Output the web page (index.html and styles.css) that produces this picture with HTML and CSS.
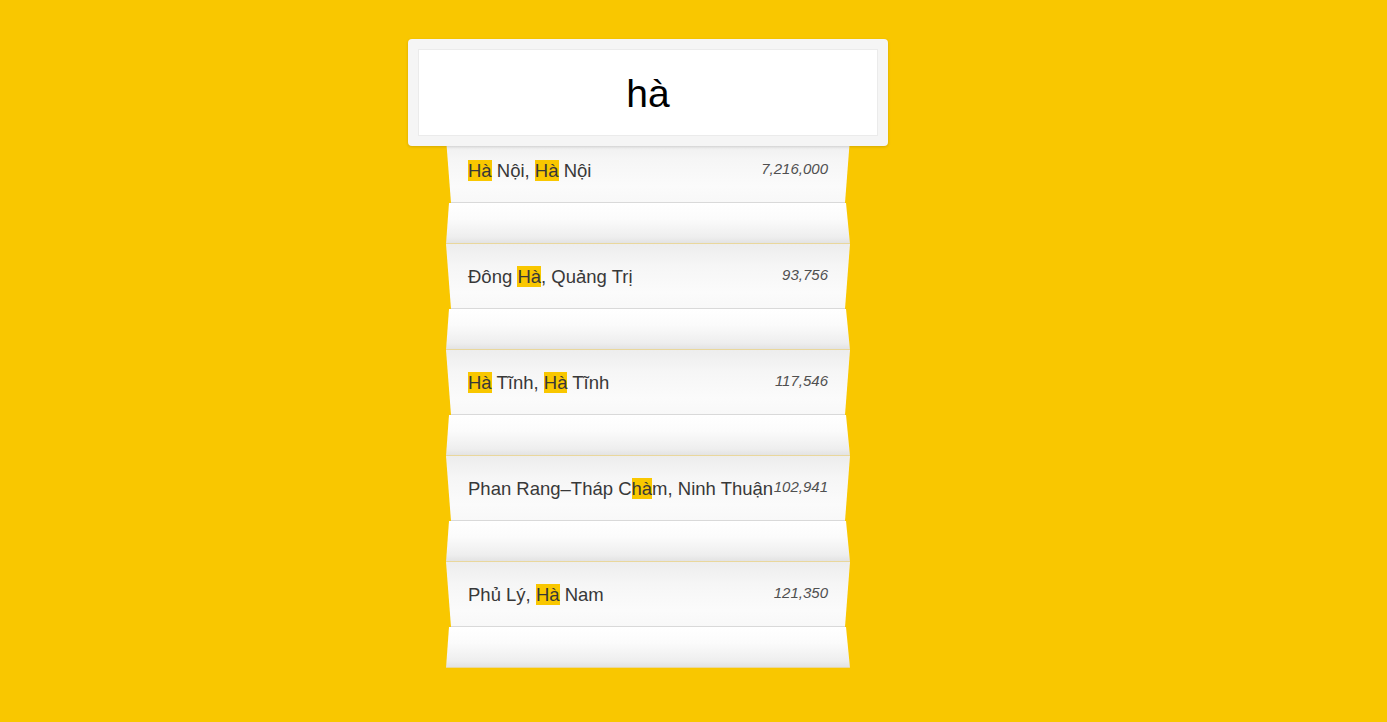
FILE: index.html
```html
<!DOCTYPE html>
<html lang="vi">
<head>
<meta charset="utf-8">
<title>Tìm thành phố</title>
<link rel="stylesheet" href="styles.css">
</head>
<body>
<div class="app">
  <div class="search">
    <input class="search-input" type="text" value="hà">
  </div>
  <ul class="results">
    <li class="item">
      <div class="fold-top">
        <span class="name"><mark>Hà</mark> Nội, <mark>Hà</mark> Nội</span>
        <span class="pop">7,216,000</span>
      </div>
      <div class="fold-bottom"></div>
    </li>
    <li class="item">
      <div class="fold-top">
        <span class="name">Đông <mark>Hà</mark>, Quảng Trị</span>
        <span class="pop">93,756</span>
      </div>
      <div class="fold-bottom"></div>
    </li>
    <li class="item">
      <div class="fold-top">
        <span class="name"><mark>Hà</mark> Tĩnh, <mark>Hà</mark> Tĩnh</span>
        <span class="pop">117,546</span>
      </div>
      <div class="fold-bottom"></div>
    </li>
    <li class="item">
      <div class="fold-top">
        <span class="name">Phan Rang–Tháp C<mark>hà</mark>m, Ninh Thuận</span>
        <span class="pop">102,941</span>
      </div>
      <div class="fold-bottom"></div>
    </li>
    <li class="item">
      <div class="fold-top">
        <span class="name">Phủ Lý, <mark>Hà</mark> Nam</span>
        <span class="pop">121,350</span>
      </div>
      <div class="fold-bottom"></div>
    </li>
  </ul>
</div>
</body>
</html>
```

FILE: styles.css
```css
html, body {
  margin: 0;
  padding: 0;
}

body {
  background: #f9c700;
  font-family: "Liberation Sans", Arial, sans-serif;
  min-height: 722px;
}

.app {
  width: 480px;
  margin: 39px 0 0 408px;
}

.search {
  position: relative;
  z-index: 2;
  background: #f5f5f5;
  border-radius: 4px;
  padding: 10px;
  box-shadow: 0 1px 3px rgba(0, 0, 0, 0.15);
}

.search-input {
  display: block;
  box-sizing: border-box;
  width: 100%;
  height: 87px;
  margin: 0;
  border: 1px solid #ebebeb;
  background: #fff;
  font-family: "Liberation Sans", Arial, sans-serif;
  font-size: 39px;
  color: #000;
  text-align: center;
  outline: none;
  padding: 3px 0 0;
}

.results {
  list-style: none;
  margin: -8px auto 0;
  padding: 0;
  width: 404px;
  position: relative;
  z-index: 1;
}

.item {
  display: flex;
  flex-direction: column;
}

.fold-top {
  box-sizing: border-box;
  height: 65px;
  display: flex;
  justify-content: space-between;
  align-items: flex-start;
  padding: 21px 22px 0;
  background: linear-gradient(to bottom, #ededed 0%, #f6f6f6 35%, #fbfbfb 75%, #f8f8f8 100%);
  border-bottom: 1px solid #d9d9d9;
  clip-path: polygon(0 0, 100% 0, calc(100% - 5px) 100%, 5px 100%);
}

.fold-bottom {
  box-sizing: border-box;
  height: 41px;
  background: linear-gradient(to bottom, #ffffff 0%, #fbfbfb 40%, #eeeeee 85%, #e3e3e3 100%);
  border-bottom: 1px solid #e9d79c;
  clip-path: polygon(3px 0, calc(100% - 4px) 0, 100% 100%, 0 100%);
}

.name {
  min-width: 0;
  font-size: 18.5px;
  line-height: 23px;
  color: #383838;
  white-space: nowrap;
}

.name mark {
  background: #f9c700;
  color: #383838;
}

.pop {
  flex-shrink: 0;
  font-size: 15px;
  line-height: 17px;
  font-style: italic;
  color: #505050;
  white-space: nowrap;
  margin-top: 1px;
}
```
